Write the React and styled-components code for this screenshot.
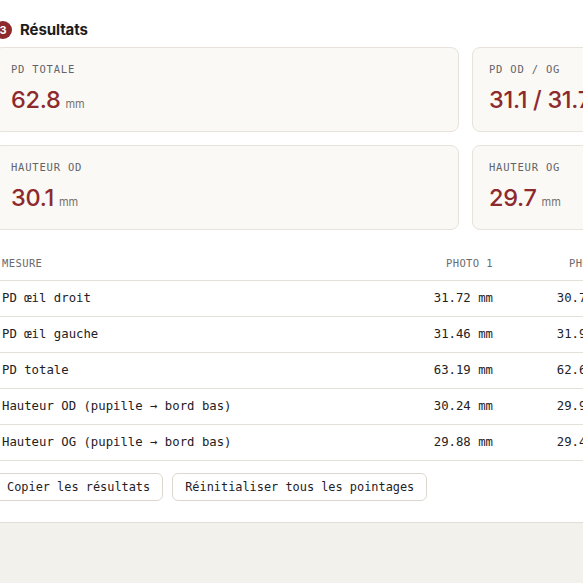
import React from "react"
import styled, { createGlobalStyle } from "styled-components"

const GlobalStyle = createGlobalStyle`
  html, body {
    margin: 0;
    padding: 0;
    background: #f3f1ec;
    overflow: hidden;
  }
  body {
    font-family: Inter, "Noto Sans", sans-serif;
    color: #1e1c1a;
  }
`

const Panel = styled.section`
  background: #ffffff;
  border-bottom: 1px solid #e2ded6;
  padding: 20px 0 21px 0;
  margin-left: -6px;
  width: 943px;
`

const Heading = styled.h2`
  display: flex;
  align-items: center;
  gap: 8px;
  margin: 0 0 7px 0;
  font-size: 15px;
  font-weight: 700;
  line-height: 20px;
  letter-spacing: -0.1px;
  color: #1e1c1a;
`

const Step = styled.span`
  display: inline-flex;
  align-items: center;
  justify-content: center;
  width: 18px;
  height: 18px;
  border-radius: 50%;
  background: #8c2a2e;
  color: #fff;
  font-size: 11px;
  font-weight: 700;
`

const Cards = styled.div`
  display: grid;
  grid-template-columns: 1fr 1fr;
  gap: 13px 13px;
`

const Card = styled.div`
  background: #fbf9f5;
  border: 1px solid #e7e3db;
  border-radius: 8px;
  padding: 14px 16px 17px 16px;
`

const Label = styled.div`
  font-family: "DejaVu Sans Mono", "Liberation Mono", monospace;
  font-size: 10.5px;
  line-height: 14px;
  letter-spacing: 0.8px;
  text-transform: uppercase;
  color: #62646a;
`

const Value = styled.div`
  margin-top: 10px;
  height: 28px;
  font-size: 23.5px;
  font-weight: 500;
  line-height: 28px;
  letter-spacing: -0.3px;
  color: #8c2a2e;
  white-space: nowrap;
`

const Unit = styled.span`
  margin-left: 5px;
  font-size: 11px;
  font-weight: 400;
  letter-spacing: 0;
  color: #76736e;
`

const Table = styled.div`
  margin-top: 17px;
  display: grid;
  grid-template-columns: 384px 123px 123px 1fr;
  font-family: "DejaVu Sans Mono", "Liberation Mono", monospace;
`

const Cell = styled.div`
  padding: ${(p) => (p.$head ? "10px 8px" : "11px 8px")};
  border-bottom: 1px solid #e3e0d8;
  font-size: ${(p) => (p.$head ? "10.5px" : "12.3px")};
  line-height: 13px;
  letter-spacing: ${(p) => (p.$head ? "0.4px" : "0")};
  text-transform: ${(p) => (p.$head ? "uppercase" : "none")};
  color: ${(p) => (p.$head ? "#6a6b6e" : "#23211f")};
  text-align: ${(p) => (p.$num ? "right" : "left")};
  white-space: nowrap;
`

const Actions = styled.div`
  display: flex;
  gap: 9px;
  margin-top: 12px;
`

const Button = styled.button`
  box-sizing: border-box;
  height: 28px;
  padding: 0 12px;
  background: #ffffff;
  border: 1px solid #dcd8d0;
  border-radius: 6px;
  font-family: "DejaVu Sans Mono", "Liberation Mono", monospace;
  font-size: 11.9px;
  color: #23211f;
  cursor: pointer;
`

const summary = [
  { label: "PD totale", value: "62.8", unit: true },
  { label: "PD OD / OG", value: "31.1 / 31.7", unit: false },
  { label: "Hauteur OD", value: "30.1", unit: true },
  { label: "Hauteur OG", value: "29.7", unit: true },
]

const rows = [
  ["PD œil droit", "31.72", "30.71", "31.22"],
  ["PD œil gauche", "31.46", "31.94", "31.70"],
  ["PD totale", "63.19", "62.65", "62.92"],
  ["Hauteur OD (pupille → bord bas)", "30.24", "29.96", "30.10"],
  ["Hauteur OG (pupille → bord bas)", "29.88", "29.47", "29.68"],
]

export default function App() {
  return (
    <>
      <GlobalStyle />
      <Panel>
        <Heading>
          <Step>3</Step>
          Résultats
        </Heading>
        <Cards>
          {summary.map((s) => (
            <Card key={s.label}>
              <Label>{s.label}</Label>
              <Value>
                {s.value}
                {s.unit && <Unit>mm</Unit>}
              </Value>
            </Card>
          ))}
        </Cards>
        <Table>
          <Cell $head>Mesure</Cell>
          <Cell $head $num>Photo 1</Cell>
          <Cell $head $num>Photo 2</Cell>
          <Cell $head $num>Moyenne</Cell>
          {rows.map((r) => (
            <React.Fragment key={r[0]}>
              <Cell>{r[0]}</Cell>
              <Cell $num>{r[1]} mm</Cell>
              <Cell $num>{r[2]} mm</Cell>
              <Cell $num>{r[3]} mm</Cell>
            </React.Fragment>
          ))}
        </Table>
        <Actions>
          <Button>Copier les résultats</Button>
          <Button>Réinitialiser tous les pointages</Button>
        </Actions>
      </Panel>
    </>
  )
}
